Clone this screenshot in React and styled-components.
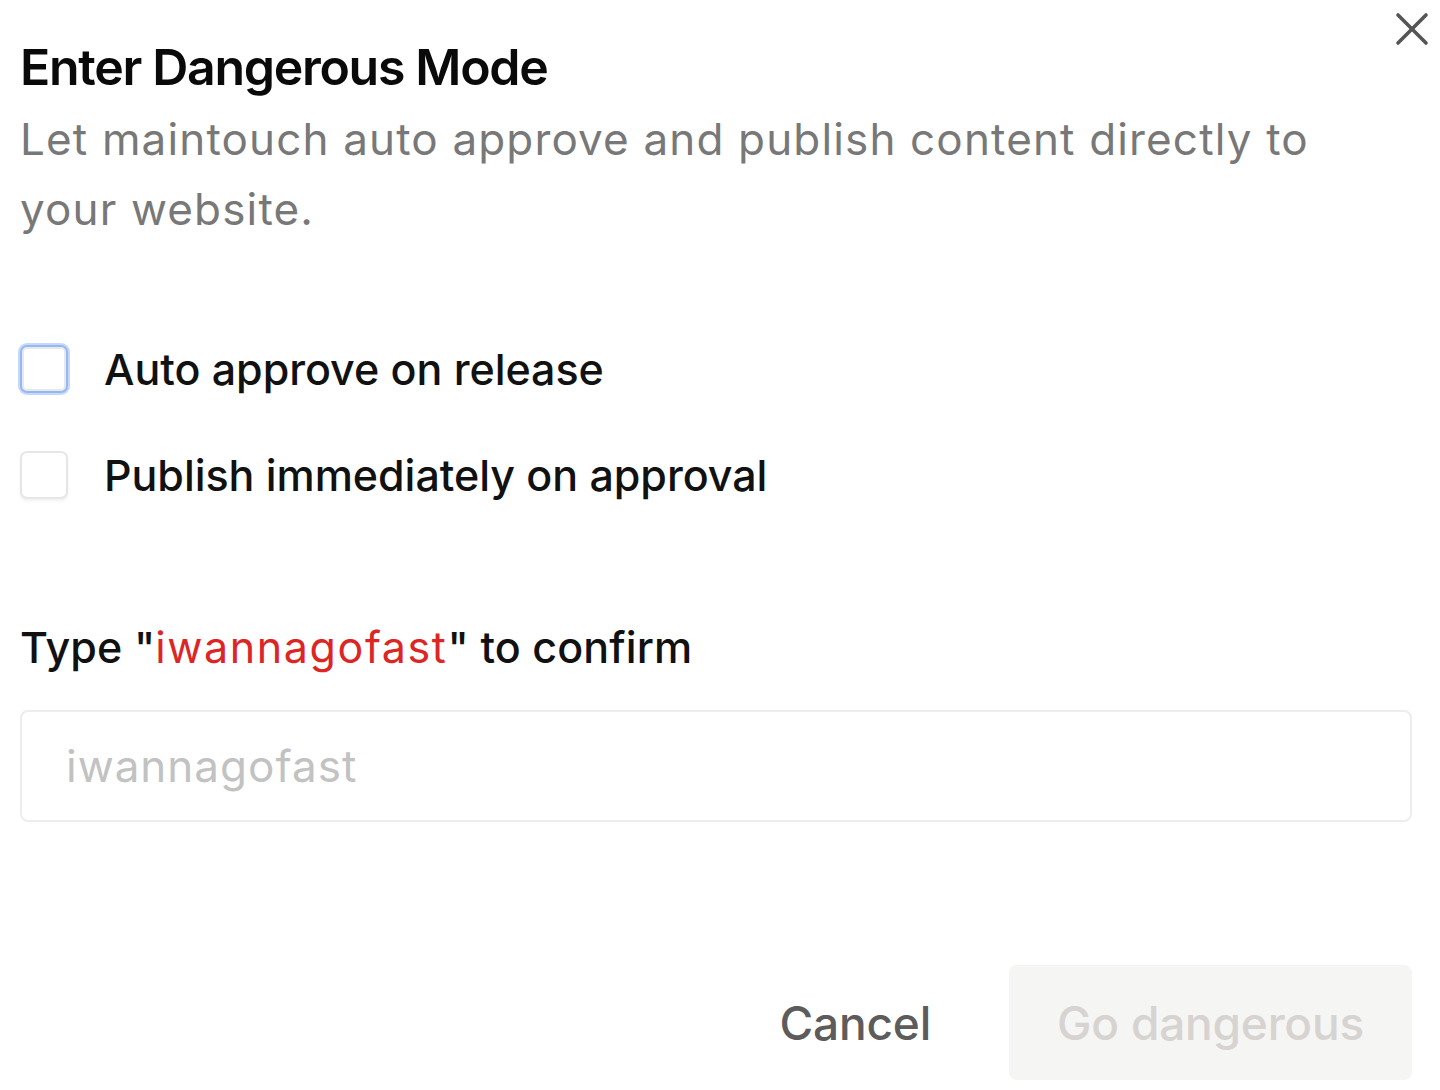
import React, { useState } from "react";
import styled, { createGlobalStyle } from "styled-components";

const GlobalStyle = createGlobalStyle`
  html, body {
    margin: 0;
    padding: 0;
    background: #ffffff;
  }
  body {
    font-family: Inter, "Liberation Sans", sans-serif;
    -webkit-font-smoothing: antialiased;
  }
`;

const Dialog = styled.div`
  position: relative;
  box-sizing: border-box;
  width: 1440px;
  height: 1090px;
  padding: 37px 28px 0 20px;
  overflow: hidden;
  background: #ffffff;
`;

const CloseButton = styled.button`
  position: absolute;
  top: 10px;
  right: 9px;
  width: 38px;
  height: 38px;
  padding: 0;
  border: none;
  background: transparent;
  color: #555555;
  display: flex;
  align-items: center;
  justify-content: center;
  cursor: pointer;
`;

const Title = styled.h2`
  margin: 0;
  font-size: 50px;
  line-height: 60px;
  font-weight: 600;
  color: #0a0a0a;
  letter-spacing: -1.3px;
`;

const Description = styled.p`
  margin: 7px 0 0;
  font-size: 44px;
  line-height: 70px;
  font-weight: 400;
  color: #787878;
  letter-spacing: 1.15px;
`;

const Options = styled.div`
  display: flex;
  flex-direction: column;
  gap: 46px;
  margin-top: 95px;
`;

const OptionRow = styled.label`
  display: flex;
  align-items: center;
  gap: 36px;
  height: 60px;
  cursor: pointer;
`;

const Box = styled.span`
  box-sizing: border-box;
  flex: none;
  width: 48px;
  height: 48px;
  border-radius: 7px;
  border: 2px solid ${(p) => (p.$focused ? "#94b8f7" : "#e6e6e6")};
  box-shadow: ${(p) =>
    p.$focused
      ? "0 0 0 2px #c7d9fb, inset 0 0 0 2px #e8e8e8"
      : "0 2px 3px rgba(0,0,0,0.06)"};
  background: #ffffff;
`;

const OptionText = styled.span`
  font-size: 43px;
  line-height: 60px;
  font-weight: 500;
  color: #111111;
  letter-spacing: -0.05px;
`;

const ConfirmLabel = styled.div`
  margin-top: 112px;
  font-size: 43px;
  line-height: 60px;
  font-weight: 500;
  color: #111111;
  letter-spacing: 0.1px;
`;

const Keyword = styled.span`
  color: #dc2626;
  font-weight: 400;
  letter-spacing: 1.6px;
`;

const Input = styled.input`
  display: block;
  box-sizing: border-box;
  width: 1392px;
  height: 112px;
  margin-top: 33px;
  padding: 0 44px;
  border: 2px solid #ededed;
  border-radius: 8px;
  font-family: Inter, "Liberation Sans", sans-serif;
  font-size: 44px;
  letter-spacing: 1px;
  color: #111111;
  outline: none;
  &::placeholder {
    color: #c2c2c2;
  }
`;

const Footer = styled.div`
  display: flex;
  justify-content: flex-end;
  gap: 30px;
  width: 1392px;
  margin-top: 143px;
`;

const Button = styled.button`
  box-sizing: border-box;
  height: 115px;
  padding: 0 48px;
  border: none;
  border-radius: 8px;
  font-family: Inter, "Liberation Sans", sans-serif;
  font-size: 46px;
  font-weight: 500;
  letter-spacing: -0.2px;
  background: ${(p) => (p.$variant === "ghost" ? "transparent" : "#f5f5f4")};
  color: ${(p) => (p.$variant === "ghost" ? "#5c5c5c" : "#d6d3d1")};
  cursor: ${(p) => (p.disabled ? "default" : "pointer")};
`;

export default function App() {
  const [value, setValue] = useState("");
  return (
    <>
      <GlobalStyle />
      <Dialog>
        <CloseButton aria-label="Close">
          <svg width="34" height="34" viewBox="0 0 34 34" fill="none" stroke="currentColor" strokeWidth="3.6" strokeLinecap="round">
            <path d="M3 3 31 31" />
            <path d="M31 3 3 31" />
          </svg>
        </CloseButton>
        <Title>Enter Dangerous Mode</Title>
        <Description>
          Let maintouch auto approve and publish content directly to your website.
        </Description>
        <Options>
          <OptionRow>
            <Box $focused />
            <OptionText>Auto approve on release</OptionText>
          </OptionRow>
          <OptionRow>
            <Box />
            <OptionText>Publish immediately on approval</OptionText>
          </OptionRow>
        </Options>
        <ConfirmLabel>
          Type "<Keyword>iwannagofast</Keyword>" to confirm
        </ConfirmLabel>
        <Input
          placeholder="iwannagofast"
          value={value}
          onChange={(e) => setValue(e.target.value)}
        />
        <Footer>
          <Button $variant="ghost">Cancel</Button>
          <Button disabled={value !== "iwannagofast"}>Go dangerous</Button>
        </Footer>
      </Dialog>
    </>
  );
}
